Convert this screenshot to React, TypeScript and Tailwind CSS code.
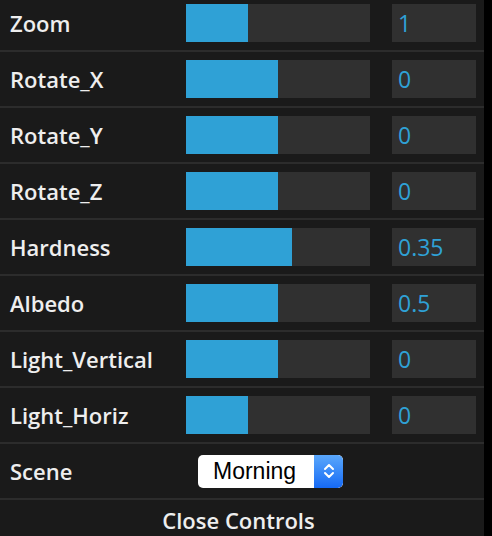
import React from 'react';

type SliderRow = {
    label: string;
    fill: number;
    value: string;
};

const ROWS: SliderRow[] = [
    { label: 'Zoom', fill: 62, value: '1' },
    { label: 'Rotate_X', fill: 92, value: '0' },
    { label: 'Rotate_Y', fill: 92, value: '0' },
    { label: 'Rotate_Z', fill: 92, value: '0' },
    { label: 'Hardness', fill: 106, value: '0.35' },
    { label: 'Albedo', fill: 92, value: '0.5' },
    { label: 'Light_Vertical', fill: 92, value: '0' },
    { label: 'Light_Horiz', fill: 62, value: '0' },
];

const LABEL_FONT = "font-['Open_Sans',sans-serif]";

function Row({ row }: { row: SliderRow }) {
    return (
        <div className="flex h-[56px] items-center border-b-2 border-[#2c2c2c]">
            <div className={`w-[186px] pl-[10px] text-[22px] font-semibold text-[#eeeeee] ${LABEL_FONT}`}>
                {row.label}
            </div>
            <div className="h-[38px] w-[184px] bg-[#303030]">
                <div className="h-full bg-[#2fa1d6]" style={{ width: row.fill }} />
            </div>
            <div className={`ml-[22px] flex h-[38px] w-[84px] items-center bg-[#303030] pl-[6px] text-[23px] text-[#2fa1d6] ${LABEL_FONT}`}>
                {row.value}
            </div>
        </div>
    );
}

function Stepper() {
    return (
        <div className="flex h-full w-[29px] items-center justify-center rounded-r-[5px] bg-gradient-to-b from-[#5aa7fb] to-[#1569f4]">
            <svg width="12" height="20" viewBox="0 0 12 20" fill="none">
                <path d="M2 8 L6 4 L10 8" stroke="white" strokeWidth="2" strokeLinecap="round" strokeLinejoin="round" />
                <path d="M2 12 L6 16 L10 12" stroke="white" strokeWidth="2" strokeLinecap="round" strokeLinejoin="round" />
            </svg>
        </div>
    );
}

export default function App() {
    return (
        <div className="h-[536px] w-[492px] overflow-hidden bg-black">
            <div className="-mt-[4px] w-[484px] bg-[#1a1a1a]">
                {ROWS.map((row) => (
                    <Row key={row.label} row={row} />
                ))}

                {/* Scene select */}
                <div className="flex h-[56px] items-center border-b-2 border-[#2c2c2c]">
                    <div className={`w-[186px] pl-[10px] text-[22px] font-semibold text-[#eeeeee] ${LABEL_FONT}`}>
                        Scene
                    </div>
                    <div className="ml-[12px] flex h-[33px] w-[145px] overflow-hidden rounded-[5px] bg-white">
                        <div className="flex flex-1 items-center pl-[15px] font-['Liberation_Sans',sans-serif] text-[23px] text-black">
                            Morning
                        </div>
                        <Stepper />
                    </div>
                </div>

                {/* Close button */}
                <div className={`flex h-[40px] items-center justify-center pr-[7px] text-[22px] font-semibold text-[#eeeeee] ${LABEL_FONT}`}>
                    Close Controls
                </div>
            </div>
        </div>
    );
}
